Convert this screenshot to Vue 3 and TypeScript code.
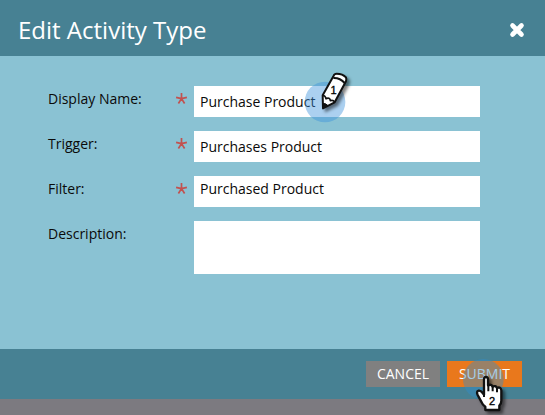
<script setup lang="ts">
import { reactive } from 'vue'

interface Field {
  id: string
  label: string
  value: string
  raised?: boolean
}

const fields = reactive<Field[]>([
  { id: 'display-name', label: 'Display Name:', value: 'Purchase Product' },
  { id: 'trigger', label: 'Trigger:', value: 'Purchases Product' },
  { id: 'filter', label: 'Filter:', value: 'Purchased Product', raised: true },
])
</script>

<template>
  <div class="screen">
    <header class="header">
      <h1 class="title">Edit Activity Type</h1>
      <button class="close" type="button">
        <svg width="16" height="16" viewBox="0 0 16 16">
          <path d="M3.5 3.5L12.5 12.5M12.5 3.5L3.5 12.5" stroke="#fff" stroke-width="4.6" stroke-linecap="round" />
        </svg>
      </button>
    </header>

    <main class="body">
      <div v-for="f in fields" :key="f.id" class="row">
        <label class="label" :for="f.id">{{ f.label }}</label>
        <svg class="star" width="14" height="14" viewBox="0 0 14 14">
          <path d="M7.5 6.6V1M7.5 6.6L2.1 5.4M7.5 6.6L12.9 5.4M7.5 6.6L4.4 11.5M7.5 6.6L10.6 11.5" stroke="#c2514f" stroke-width="1.7" />
        </svg>
        <input :id="f.id" v-model="f.value" class="field" :class="{ raised: f.raised }" type="text" spellcheck="false" />
      </div>
      <div class="row">
        <label class="label" for="description">Description:</label>
        <span class="star"></span>
        <textarea id="description" class="field area"></textarea>
      </div>
    </main>

    <footer class="footer">
      <button class="btn cancel" type="button">CANCEL</button>
      <button class="btn submit" type="button">SUBMIT</button>
    </footer>
    <div class="strip"></div>

    <svg class="marker pencil" width="80" height="70" viewBox="0 0 240 210">
      <circle cx="105" cy="126" r="61" fill="#3d91dc" fill-opacity=".43" />
      <g class="shadow" stroke="#111" stroke-width="6" stroke-linejoin="round">
        <path d="M99 145L98 106L131 47Q133 41 140 41Q158 41 168 52Q170 57 168 64L134 127Z" fill="#fff" />
        <path d="M98 107Q105 105 108 116Q119 111 121 122Q130 119 134 127" fill="none" stroke-width="5" />
        <path d="M130 54Q150 53 164 69" fill="none" />
        <path d="M99 145V130Q108 130 114 137Z" fill="#111" stroke-width="3" />
      </g>
      <text x="131" y="101" text-anchor="middle" class="digit">1</text>
    </svg>

    <svg class="marker hand" width="105" height="70" viewBox="0 0 315 210">
      <circle cx="130" cy="103" r="61" fill="#308dcc" fill-opacity=".43" />
      <path
        class="shadow"
        d="M132 103Q132 96 138 96Q144 96 144 103V121Q154 116 158 125Q167 120 171 129Q182 124 184 136V167Q184 176 178 182V195H136V185Q128 180 125 172L113 150Q108 139 116 137Q122 136 128 144L132 149Z"
        fill="#fff" stroke="#111" stroke-width="7" stroke-linejoin="round"
      />
      <path d="M132 142V156M145 119V139M158 124V139M171 129V142" stroke="#111" stroke-width="6" />
      <text x="156" y="179" text-anchor="middle" class="digit">2</text>
    </svg>
  </div>
</template>

<style>
body {
  margin: 0;
  overflow: hidden;
}
</style>

<style scoped>
.screen {
  position: relative;
  display: flex;
  flex-direction: column;
  width: 545px;
  height: 415px;
  overflow: hidden;
  font-family: 'Open Sans', 'Noto Sans', sans-serif;
  font-size: 14px;
  color: #0a0a0a;
  background: #8ac2d3;
}
.header {
  box-sizing: border-box;
  display: flex;
  align-items: center;
  justify-content: space-between;
  height: 56px;
  padding: 4px 20px 0 18px;
  background: #478193;
}
.title {
  margin: 0;
  font-size: 24px;
  line-height: 34px;
  font-weight: 400;
  color: #fff;
}
.close {
  display: flex;
  padding: 0;
  border: 0;
  background: none;
}
.body {
  box-sizing: border-box;
  display: flex;
  flex-direction: column;
  gap: 14px;
  height: 293px;
  padding: 30px 65px 0 48px;
}
.row {
  display: flex;
  align-items: flex-start;
}
.label {
  width: 126px;
  padding-top: 3px;
  line-height: 20px;
}
.star {
  width: 14px;
  height: 14px;
  margin: 6px 6px 0 0;
}
.field {
  box-sizing: border-box;
  width: 286px;
  height: 31px;
  margin: 0;
  padding: 0 6px 1px;
  border: 0;
  border-radius: 0;
  outline: 0;
  background: #fff;
  font: inherit;
  color: inherit;
}
.raised {
  padding: 0 6px 7px;
}
.area {
  height: 53px;
  resize: none;
}
.footer {
  box-sizing: border-box;
  display: flex;
  justify-content: flex-end;
  gap: 7px;
  height: 50px;
  padding: 12px 23px 0 0;
  background: #478193;
}
.btn {
  height: 26px;
  padding: 0;
  border: 0;
  font: inherit;
  line-height: 26px;
  color: #fff;
}
.cancel {
  width: 74px;
  background: #808080;
}
.submit {
  width: 75px;
  background: #e9781c;
}
.strip {
  height: 16px;
  background: #7c7a80;
}
.marker {
  position: absolute;
  pointer-events: none;
}
.pencil {
  left: 290px;
  top: 60px;
}
.hand {
  left: 440px;
  top: 345px;
}
.shadow {
  filter: drop-shadow(8px 8px 5px rgba(0, 0, 0, 0.5));
}
.digit {
  font-family: 'Liberation Sans', Arial, sans-serif;
  font-size: 33px;
  fill: #000;
  stroke: #000;
  stroke-width: 1px;
}
</style>
